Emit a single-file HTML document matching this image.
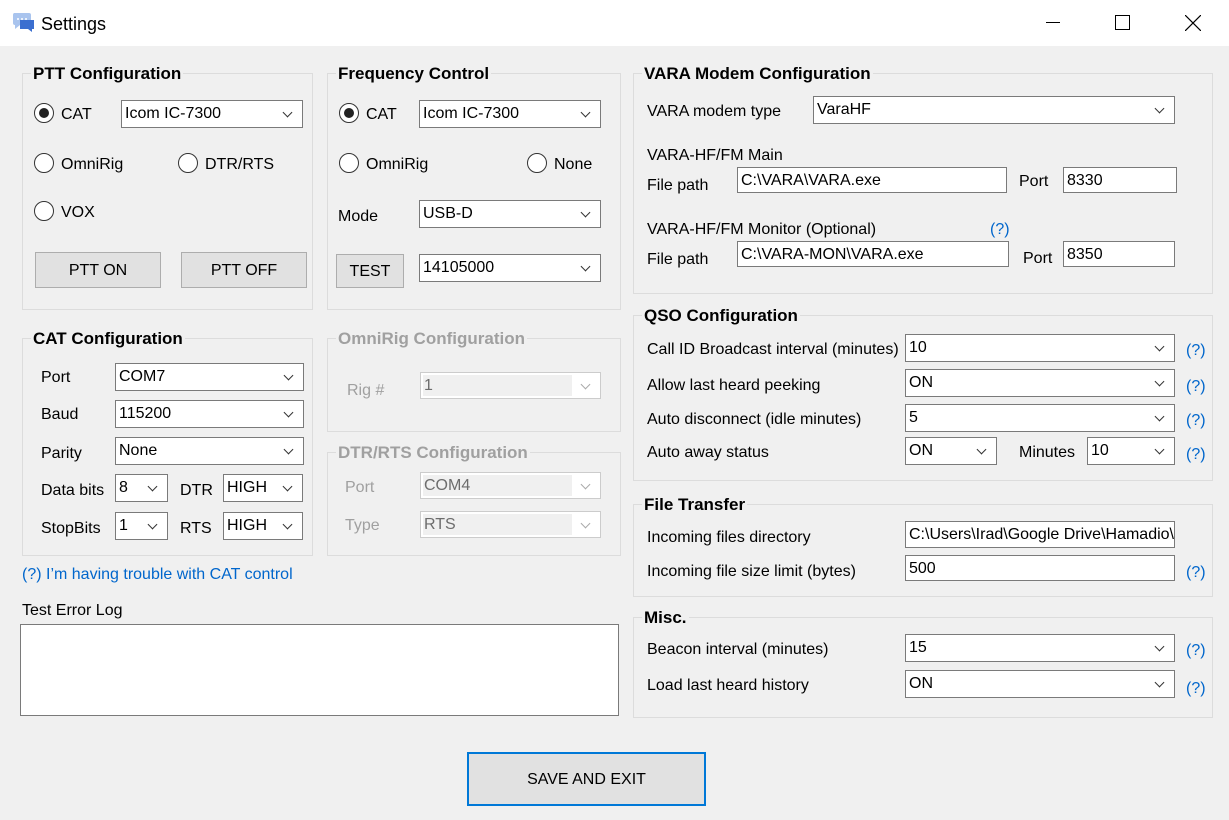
<!DOCTYPE html>
<html><head><meta charset="utf-8"><style>
*{box-sizing:border-box;margin:0;padding:0}
body{width:1229px;height:820px;background:#f0f0f0;font-family:"Liberation Sans",sans-serif;font-size:16px;color:#000;position:relative;overflow:hidden}
.a{position:absolute;white-space:nowrap;margin-top:2px}
.t{position:absolute;left:0;top:0;width:1229px;height:46px;background:#fff}
.g{position:absolute;border:1px solid #dcdcdc}
.g>b{position:absolute;top:-10px;left:8px;background:#f0f0f0;padding:0 2px;font-size:17px;font-weight:bold;line-height:20px}
.g.d>b{color:#a0a0a0}
.c{position:absolute;background:#fff;border:1px solid #7a7a7a;padding-left:3px;line-height:26px;white-space:nowrap}
.c::after{content:"";position:absolute;right:11px;top:8px;width:6px;height:6px;border-right:1px solid #333;border-bottom:1px solid #333;transform:rotate(45deg)}
.c.dis{border-color:#ccc;color:#6d6d6d}
.c.dis::before{content:"";position:absolute;left:2px;top:2px;bottom:2px;right:28px;background:#f0f0f0;z-index:0}
.c.dis span{position:relative}
.c.dis::after{border-color:#aaa}
.x{position:absolute;background:#fff;border:1px solid #7a7a7a;padding-left:3px;line-height:25px;overflow:hidden;white-space:nowrap}
.r{position:absolute;width:20px;height:20px;border:1.3px solid #333;border-radius:50%;background:#fff}
.r.on::after{content:"";position:absolute;left:4px;top:4px;width:10px;height:10px;border-radius:50%;background:#222}
.btn{position:absolute;background:#e1e1e1;border:1px solid #adadad;text-align:center}
.q{position:absolute;color:#0066cc;margin-top:2px}
.gr{color:#a0a0a0}
</style></head><body>
<div class="t"></div>
<svg class="a" style="left:12px;top:9px" width="24" height="22" viewBox="0 0 24 22"><path d="M2 2h15a2 2 0 0 1 2 2v8a2 2 0 0 1-2 2H8l-5 4v-4a2 2 0 0 1-2-2V4a2 2 0 0 1 1-2z" fill="#a9c4ee"/><path d="M8 9h14v9h-2v3l-4-3H8z" fill="#3b6fd0"/><circle cx="6" cy="8" r="1" fill="#fff"/><circle cx="10" cy="8" r="1" fill="#fff"/><circle cx="14" cy="8" r="1" fill="#fff"/></svg>
<div class="a" style="left:41px;top:12px;font-size:18px">Settings</div>
<div class="a" style="left:1046px;top:20px;width:14px;height:1px;background:#000"></div>
<div class="a" style="left:1115px;top:13px;width:15px;height:15px;border:1px solid #000"></div>
<svg class="a" style="left:1185px;top:13px" width="16" height="16"><path d="M0 0L16 16M16 0L0 16" stroke="#000" stroke-width="1.2"/></svg>

<!-- PTT -->
<div class="g" style="left:22px;top:73px;width:291px;height:237px"><b>PTT Configuration</b></div>
<div class="r on" style="left:34px;top:103px"></div><div class="a" style="left:61px;top:104px">CAT</div>
<div class="c" style="left:121px;top:100px;width:182px;height:28px">Icom IC-7300</div>
<div class="r" style="left:34px;top:153px"></div><div class="a" style="left:61px;top:154px">OmniRig</div>
<div class="r" style="left:178px;top:153px"></div><div class="a" style="left:205px;top:154px">DTR/RTS</div>
<div class="r" style="left:34px;top:201px"></div><div class="a" style="left:61px;top:202px">VOX</div>
<div class="btn" style="left:35px;top:252px;width:126px;height:36px;line-height:36px">PTT ON</div>
<div class="btn" style="left:181px;top:252px;width:126px;height:36px;line-height:36px">PTT OFF</div>

<!-- Freq -->
<div class="g" style="left:327px;top:73px;width:294px;height:237px"><b>Frequency Control</b></div>
<div class="r on" style="left:339px;top:103px"></div><div class="a" style="left:366px;top:104px">CAT</div>
<div class="c" style="left:419px;top:100px;width:182px;height:28px">Icom IC-7300</div>
<div class="r" style="left:339px;top:153px"></div><div class="a" style="left:366px;top:154px">OmniRig</div>
<div class="r" style="left:527px;top:153px"></div><div class="a" style="left:554px;top:154px">None</div>
<div class="a" style="left:338px;top:206px">Mode</div>
<div class="c" style="left:419px;top:200px;width:182px;height:28px">USB-D</div>
<div class="btn" style="left:336px;top:254px;width:68px;height:34px;line-height:34px">TEST</div>
<div class="c" style="left:419px;top:254px;width:182px;height:28px">14105000</div>

<!-- CAT -->
<div class="g" style="left:22px;top:338px;width:291px;height:218px"><b>CAT Configuration</b></div>
<div class="a" style="left:41px;top:367px">Port</div><div class="c" style="left:115px;top:363px;width:189px;height:28px">COM7</div>
<div class="a" style="left:41px;top:404px">Baud</div><div class="c" style="left:115px;top:400px;width:189px;height:28px">115200</div>
<div class="a" style="left:41px;top:443px">Parity</div><div class="c" style="left:115px;top:437px;width:189px;height:28px">None</div>
<div class="a" style="left:41px;top:480px">Data bits</div><div class="c" style="left:115px;top:474px;width:53px;height:28px">8</div>
<div class="a" style="left:180px;top:480px">DTR</div><div class="c" style="left:223px;top:474px;width:80px;height:28px">HIGH</div>
<div class="a" style="left:41px;top:518px">StopBits</div><div class="c" style="left:115px;top:512px;width:53px;height:28px">1</div>
<div class="a" style="left:180px;top:518px">RTS</div><div class="c" style="left:223px;top:512px;width:80px;height:28px">HIGH</div>
<div class="q" style="left:22px;top:564px">(?) I’m having trouble with CAT control</div>
<div class="a" style="left:22px;top:600px">Test Error Log</div>
<div class="a" style="left:20px;top:622px;width:599px;height:92px;background:#fff;border:1px solid #7a7a7a"></div>

<!-- OmniRig -->
<div class="g d" style="left:327px;top:338px;width:294px;height:94px"><b>OmniRig Configuration</b></div>
<div class="a gr" style="left:347px;top:380px">Rig #</div><div class="c dis" style="left:420px;top:372px;width:181px;height:27px"><span>1</span></div>
<div class="g d" style="left:327px;top:452px;width:294px;height:104px"><b>DTR/RTS Configuration</b></div>
<div class="a gr" style="left:345px;top:477px">Port</div><div class="c dis" style="left:420px;top:472px;width:181px;height:27px"><span>COM4</span></div>
<div class="a gr" style="left:345px;top:515px">Type</div><div class="c dis" style="left:420px;top:511px;width:181px;height:27px"><span>RTS</span></div>

<!-- VARA -->
<div class="g" style="left:633px;top:73px;width:580px;height:221px"><b>VARA Modem Configuration</b></div>
<div class="a" style="left:647px;top:101px">VARA modem type</div><div class="c" style="left:813px;top:96px;width:362px;height:28px">VaraHF</div>
<div class="a" style="left:647px;top:145px">VARA-HF/FM Main</div>
<div class="a" style="left:647px;top:175px">File path</div><div class="x" style="left:737px;top:167px;width:270px;height:26px">C:\VARA\VARA.exe</div>
<div class="a" style="left:1019px;top:171px">Port</div><div class="x" style="left:1063px;top:167px;width:114px;height:26px">8330</div>
<div class="a" style="left:647px;top:219px">VARA-HF/FM Monitor (Optional)</div><div class="q" style="left:990px;top:219px">(?)</div>
<div class="a" style="left:647px;top:249px">File path</div><div class="x" style="left:737px;top:241px;width:272px;height:26px">C:\VARA-MON\VARA.exe</div>
<div class="a" style="left:1023px;top:248px">Port</div><div class="x" style="left:1063px;top:241px;width:112px;height:26px">8350</div>

<!-- QSO -->
<div class="g" style="left:633px;top:315px;width:580px;height:166px"><b>QSO Configuration</b></div>
<div class="a" style="left:647px;top:339px">Call ID Broadcast interval (minutes)</div><div class="c" style="left:905px;top:334px;width:270px;height:28px">10</div><div class="q" style="left:1186px;top:340px">(?)</div>
<div class="a" style="left:647px;top:375px">Allow last heard peeking</div><div class="c" style="left:905px;top:369px;width:270px;height:28px">ON</div><div class="q" style="left:1186px;top:376px">(?)</div>
<div class="a" style="left:647px;top:409px">Auto disconnect (idle minutes)</div><div class="c" style="left:905px;top:404px;width:270px;height:28px">5</div><div class="q" style="left:1186px;top:410px">(?)</div>
<div class="a" style="left:647px;top:442px">Auto away status</div><div class="c" style="left:905px;top:437px;width:92px;height:28px">ON</div>
<div class="a" style="left:1019px;top:442px">Minutes</div><div class="c" style="left:1087px;top:437px;width:88px;height:28px">10</div><div class="q" style="left:1186px;top:444px">(?)</div>

<!-- File -->
<div class="g" style="left:633px;top:504px;width:580px;height:93px"><b>File Transfer</b></div>
<div class="a" style="left:647px;top:527px">Incoming files directory</div><div class="x" style="left:905px;top:521px;width:270px;height:27px">C:\Users\Irad\Google&nbsp;Drive\Hamadio\w</div>
<div class="a" style="left:647px;top:561px">Incoming file size limit (bytes)</div><div class="x" style="left:905px;top:555px;width:270px;height:26px">500</div><div class="q" style="left:1186px;top:562px">(?)</div>

<!-- Misc -->
<div class="g" style="left:633px;top:617px;width:580px;height:101px"><b>Misc.</b></div>
<div class="a" style="left:647px;top:639px">Beacon interval (minutes)</div><div class="c" style="left:905px;top:634px;width:270px;height:28px">15</div><div class="q" style="left:1186px;top:640px">(?)</div>
<div class="a" style="left:647px;top:675px">Load last heard history</div><div class="c" style="left:905px;top:670px;width:270px;height:28px">ON</div><div class="q" style="left:1186px;top:678px">(?)</div>

<div class="btn" style="left:467px;top:752px;width:239px;height:54px;line-height:52px;border:2px solid #0078d7">SAVE AND EXIT</div>
</body></html>
